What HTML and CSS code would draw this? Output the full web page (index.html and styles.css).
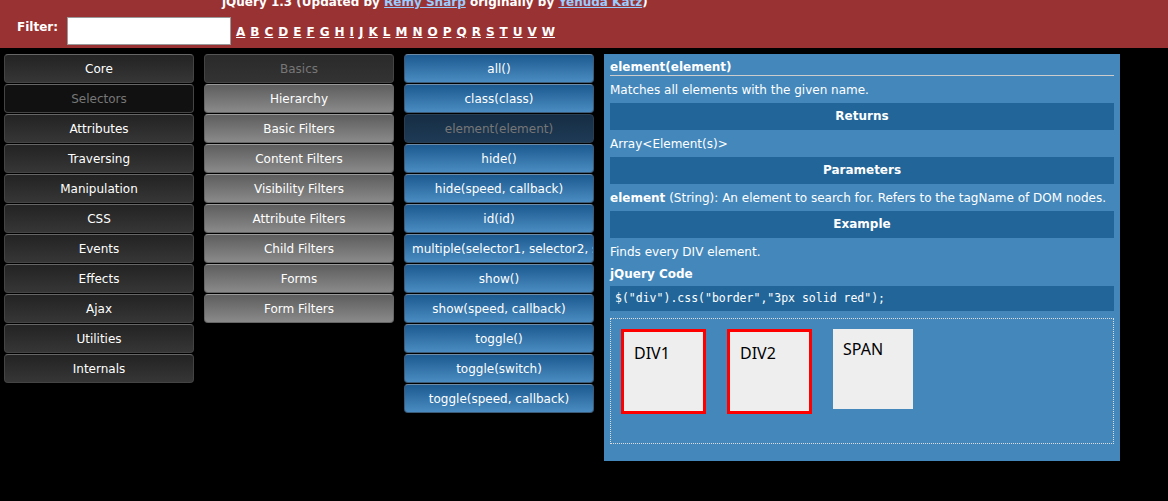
FILE: index.html
```html
<!DOCTYPE html>
<html>
<head>
<meta charset="utf-8">
<link rel="stylesheet" href="styles.css">
</head>
<body>
<div class="header">
  <div class="title">jQuery 1.3 (Updated by <a href="#">Remy Sharp</a> originally by <a href="#">Yehuda Katz</a>)</div>
  <div class="filter-row">
    <label class="filter-label">Filter:</label>
    <input class="filter-input" type="text">
    <div class="letters">
      <a href="#">A</a><a href="#">B</a><a href="#">C</a><a href="#">D</a><a href="#">E</a><a href="#">F</a><a href="#">G</a><a href="#">H</a><a href="#">I</a><a href="#">J</a><a href="#">K</a><a href="#">L</a><a href="#">M</a><a href="#">N</a><a href="#">O</a><a href="#">P</a><a href="#">Q</a><a href="#">R</a><a href="#">S</a><a href="#">T</a><a href="#">U</a><a href="#">V</a><a href="#">W</a>
    </div>
  </div>
</div>
<div class="main">
  <div class="col col-dark">
    <div class="btn">Core</div>
    <div class="btn sel">Selectors</div>
    <div class="btn">Attributes</div>
    <div class="btn">Traversing</div>
    <div class="btn">Manipulation</div>
    <div class="btn">CSS</div>
    <div class="btn">Events</div>
    <div class="btn">Effects</div>
    <div class="btn">Ajax</div>
    <div class="btn">Utilities</div>
    <div class="btn">Internals</div>
  </div>
  <div class="col col-grey">
    <div class="btn sel">Basics</div>
    <div class="btn">Hierarchy</div>
    <div class="btn">Basic Filters</div>
    <div class="btn">Content Filters</div>
    <div class="btn">Visibility Filters</div>
    <div class="btn">Attribute Filters</div>
    <div class="btn">Child Filters</div>
    <div class="btn">Forms</div>
    <div class="btn">Form Filters</div>
  </div>
  <div class="col col-blue">
    <div class="btn">all()</div>
    <div class="btn">class(class)</div>
    <div class="btn sel">element(element)</div>
    <div class="btn">hide()</div>
    <div class="btn">hide(speed, callback)</div>
    <div class="btn">id(id)</div>
    <div class="btn">multiple(selector1, selector2, selectorN)</div>
    <div class="btn">show()</div>
    <div class="btn">show(speed, callback)</div>
    <div class="btn">toggle()</div>
    <div class="btn">toggle(switch)</div>
    <div class="btn">toggle(speed, callback)</div>
  </div>
  <div class="panel">
    <div class="p-title">element(element)</div>
    <div class="p-text">Matches all elements with the given name.</div>
    <div class="p-bar">Returns</div>
    <div class="p-text">Array&lt;Element(s)&gt;</div>
    <div class="p-bar">Parameters</div>
    <div class="p-text"><b>element</b> (String): An element to search for. Refers to the tagName of DOM nodes.</div>
    <div class="p-bar">Example</div>
    <div class="p-text">Finds every DIV element.</div>
    <div class="p-sub">jQuery Code</div>
    <div class="p-code">$("div").css("border","3px solid red");</div>
    <div class="demo">
      <div class="box red">DIV1</div>
      <div class="box red">DIV2</div>
      <div class="box span">SPAN</div>
    </div>
  </div>
</div>
</body>
</html>
```
FILE: styles.css
```css
html, body {
  margin: 0;
  padding: 0;
  background: #000;
  font-family: "DejaVu Sans", Verdana, sans-serif;
  font-size: 12px;
  color: #fff;
}
.header {
  background: #993333;
  height: 48px;
  overflow: hidden;
}
.title {
  margin-top: -5px;
  padding-left: 222px;
  font-weight: bold;
  font-size: 12px;
  line-height: 14px;
  color: #fff;
}
.title a {
  color: #99ccff;
}
.filter-row {
  display: flex;
  align-items: center;
  margin-top: 8px;
}
.filter-label {
  flex-shrink: 0;
  font-weight: bold;
  padding-left: 17px;
  width: 67px;
  box-sizing: border-box;
  margin-top: -9px;
}
.filter-input {
  flex-shrink: 0;
  width: 164px;
  height: 28px;
  box-sizing: border-box;
  border: 1px solid #999;
  background: #fff;
  margin: 0;
  padding: 0;
}
.letters {
  display: flex;
  gap: 5px;
  padding-left: 5px;
  font-weight: bold;
  margin-top: 1px;
}
.letters a {
  color: #fff;
}
.main {
  display: flex;
  align-items: flex-start;
  gap: 10px;
  padding: 6px 4px;
}
.col {
  width: 190px;
  display: flex;
  flex-direction: column;
  gap: 1px;
}
.btn {
  height: 29px;
  box-sizing: border-box;
  border-radius: 4px;
  border: 1px solid #555;
  border-top-color: #777;
  text-align: center;
  line-height: 28px;
  padding: 0 7px;
  white-space: nowrap;
  overflow: hidden;
  color: #fff;
}
.col-dark .btn {
  background: linear-gradient(#232323, #363636);
  border-color: #444;
  border-top-color: #666;
}
.col-dark .btn.sel {
  background: #111;
  color: #777;
}
.col-grey .btn {
  background: linear-gradient(#5e5e5e, #8a8a8a);
  border-color: #666;
  border-top-color: #999;
}
.col-grey .btn.sel {
  background: linear-gradient(#2a2a2a, #333);
  border-color: #444;
  border-top-color: #555;
  color: #777;
}
.col-blue .btn {
  background: linear-gradient(#1c5a90, #4a8cc1);
  border-color: #3a5a78;
  border-top-color: #6a8aa8;
}
.col-blue .btn.sel {
  background: linear-gradient(#162e45, #1e3a55);
  border-color: #2a3e52;
  color: #777;
}
.panel {
  width: 516px;
  height: 407px;
  box-sizing: border-box;
  background: #4488bb;
  padding: 6px 6px;
}
.p-title {
  font-weight: bold;
  font-size: 12px;
  border-bottom: 1px solid #ccc;
  padding-bottom: 1px;
  line-height: 14px;
}
.p-text {
  line-height: 25px;
  padding-top: 2px;
  height: 27px;
  box-sizing: border-box;
}
.p-bar {
  background: #226699;
  height: 27px;
  line-height: 27px;
  text-align: center;
  font-weight: bold;
}
.p-sub {
  font-weight: bold;
  line-height: 16px;
  margin-top: 1px;
  margin-bottom: 4px;
}
.p-code {
  background: #226699;
  height: 25px;
  line-height: 25px;
  padding-left: 5px;
  font-family: "DejaVu Sans Mono", monospace;
  font-size: 11.5px;
}
.demo {
  margin-top: 7px;
  border: 1px dotted #ddd;
  height: 126px;
  box-sizing: border-box;
  display: flex;
  align-items: flex-start;
  gap: 21px;
  padding: 10px;
}
.box {
  background: #eee;
  color: #000;
  font-family: "Noto Sans", sans-serif;
  font-size: 16px;
  box-sizing: border-box;
  padding: 11px 10px;
  line-height: 20px;
}
.box.red {
  width: 85px;
  height: 85px;
  border: 3px solid #f00;
}
.box.span {
  width: 80px;
  height: 80px;
  padding-top: 10px;
}
```
